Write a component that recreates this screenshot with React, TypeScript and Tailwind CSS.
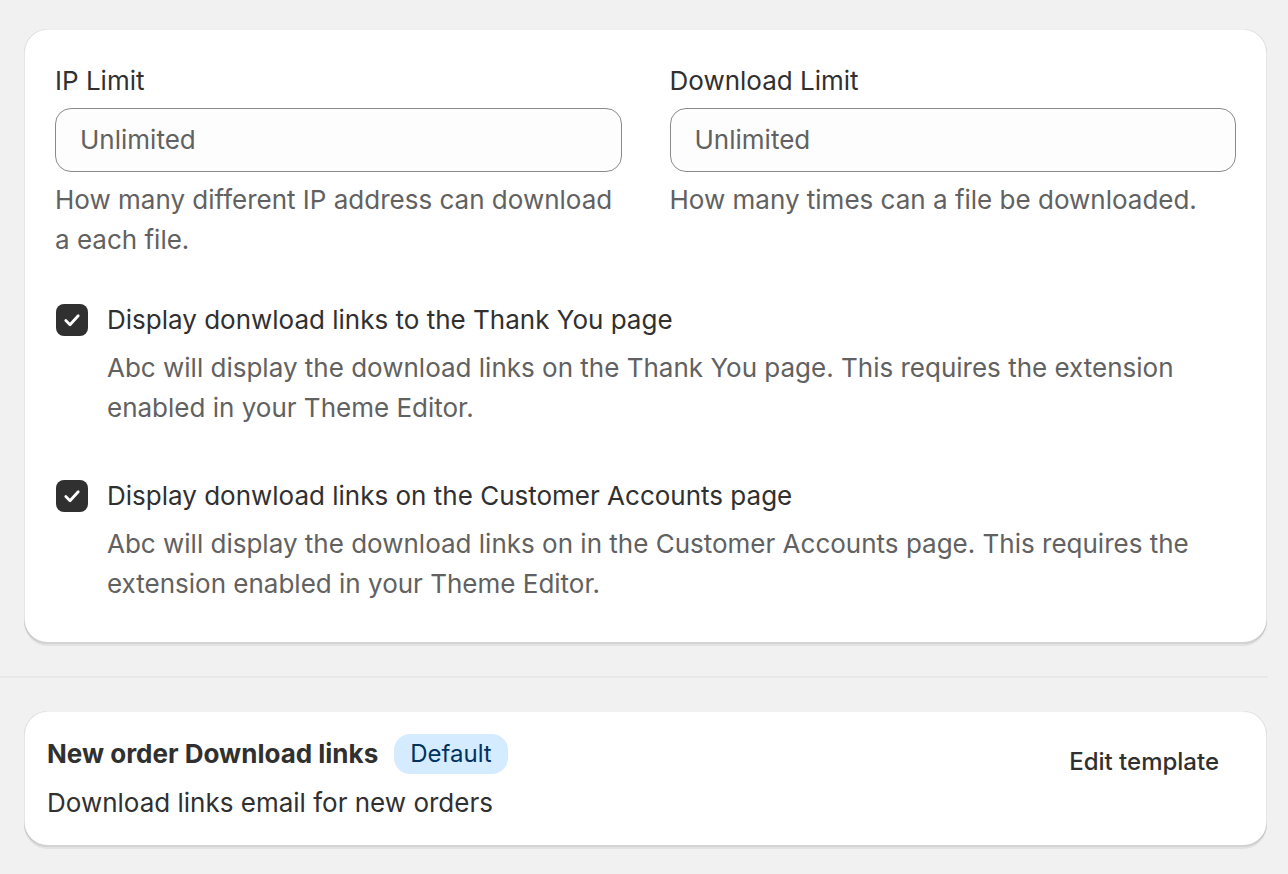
const CARD_SHADOW =
  'shadow-[0_2px_0_0_rgba(26,26,26,0.07),inset_0_-2px_0_0_rgba(0,0,0,0.17),inset_1px_0_0_0_rgba(0,0,0,0.1),inset_-1px_0_0_0_rgba(0,0,0,0.1),inset_0_1px_0_0_rgba(0,0,0,0.06)]'

const LIMITS = [
  {
    label: 'IP Limit',
    help: 'How many different IP address can download a each file.',
  },
  {
    label: 'Download Limit',
    help: 'How many times can a file be downloaded.',
  },
]

const OPTIONS = [
  {
    label: 'Display donwload links to the Thank You page',
    help: 'Abc will display the download links on the Thank You page. This requires the extension enabled in your Theme Editor.',
  },
  {
    label: 'Display donwload links on the Customer Accounts page',
    help: 'Abc will display the download links on in the Customer Accounts page. This requires the extension enabled in your Theme Editor.',
  },
]

function CheckIcon() {
  return (
    <svg viewBox="0 0 32 32" className="size-[32px]" fill="none" aria-hidden="true">
      <path
        d="M9.8 16.6l4.2 4.2 8.2-9"
        stroke="white"
        strokeWidth="2.8"
        strokeLinecap="round"
        strokeLinejoin="round"
      />
    </svg>
  )
}

export default function App() {
  return (
    <div
      className="min-h-[874px] w-full bg-[#f1f1f1] pt-[29px] text-[26px] leading-[40px] text-[#303030]"
      style={{ fontFamily: 'Inter, "Noto Sans", sans-serif' }}
    >
      <div className="w-[1268px]">
        {/* Settings card */}
        <div className={`ml-[24px] mr-[1px] rounded-[24px] bg-white px-[31px] pb-[40px] pt-[32px] ${CARD_SHADOW}`}>
          <div className="grid grid-cols-2 gap-[48px]">
            {LIMITS.map((field) => (
              <div key={field.label}>
                <p className="text-[#303030]">{field.label}</p>
                <div className="mt-[7px] flex h-[64px] items-center rounded-[16px] border border-[#8a8a8a] bg-[#fdfdfd] px-[24px]">
                  <span className="text-[#616161]">Unlimited</span>
                </div>
                <p className="mt-[8px] text-[#616161]">{field.help}</p>
              </div>
            ))}
          </div>

          <div className="mt-[40px] flex flex-col gap-[48px]">
            {OPTIONS.map((opt) => (
              <div key={opt.label}>
                <div className="flex items-center gap-[19px]">
                  <span className="ml-[1px] flex size-[32px] shrink-0 items-center justify-center rounded-[8px] bg-[#303030]">
                    <CheckIcon />
                  </span>
                  <span>{opt.label}</span>
                </div>
                <p className="mt-[8px] pl-[52px] text-[#616161]">{opt.help}</p>
              </div>
            ))}
          </div>
        </div>

        <div className="mt-[32px] h-[2px] bg-[#e8e8e8]" />

        {/* Email template card */}
        <div className={`ml-[24px] mr-[1px] mt-[33px] flex items-start justify-between rounded-[24px] bg-white pb-[24px] pl-[23px] pr-[24px] pt-[23px] ${CARD_SHADOW}`}>
          <div>
            <div className="flex items-center gap-[16px]">
              <h2 className="font-[650]">New order Download links</h2>
              <span className="flex h-[40px] items-center rounded-[16px] bg-[#d5ebff] px-[16px] text-[24px] text-[#00325e]">
                Default
              </span>
            </div>
            <p className="mt-[9px]">Download links email for new orders</p>
          </div>
          <button className="flex h-[56px] items-center px-[24px] text-[24px] font-medium text-[#303030]">
            Edit template
          </button>
        </div>
      </div>
    </div>
  )
}
